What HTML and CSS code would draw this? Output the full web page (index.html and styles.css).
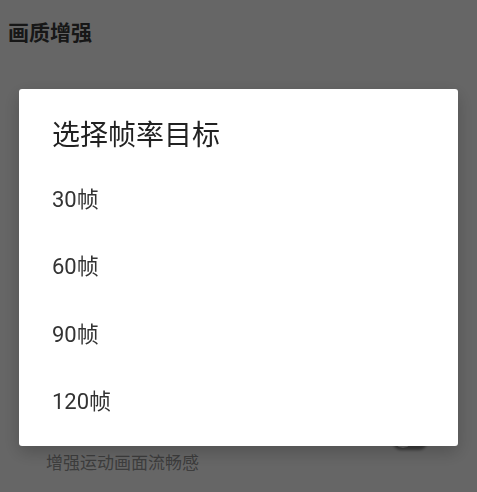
FILE: index.html
```html
<!DOCTYPE html>
<html lang="zh-CN">
<head>
<meta charset="utf-8">
<title>画质增强</title>
<link rel="stylesheet" href="styles.css">
</head>
<body>
<div class="page">
  <h1 class="page-title">画质增强</h1>
  <div class="setting-row">
    <div class="setting-desc">增强运动画面流畅感</div>
    <div class="switch"><div class="thumb"></div></div>
  </div>
</div>
<div class="overlay">
  <div class="dialog">
    <div class="dialog-title">选择帧率目标</div>
    <div class="option">30帧</div>
    <div class="option">60帧</div>
    <div class="option">90帧</div>
    <div class="option">120帧</div>
  </div>
</div>
</body>
</html>
```
FILE: styles.css
```css
html, body {
  margin: 0;
  padding: 0;
  background: #ffffff;
  font-family: Roboto, "Noto Sans CJK SC", sans-serif;
}
.page {
  padding: 18px 0 0 8px;
}
.page-title {
  margin: 0;
  font-size: 21px;
  line-height: 30px;
  font-weight: bold;
  color: #3a3a3a;
}
.setting-row {
  display: flex;
  align-items: flex-start;
  justify-content: space-between;
  margin-top: 403px;
  padding-left: 38px;
  padding-right: 50px;
}
.setting-desc {
  font-size: 17px;
  line-height: 24px;
  color: #999999;
}
.switch {
  width: 34px;
  height: 16px;
  margin-top: -21px;
  border-radius: 8px;
  background: #a8a8a8;
  box-shadow: 0 4px 3px rgba(0, 0, 0, 0.45);
  position: relative;
}
.thumb {
  position: absolute;
  left: 0;
  top: -2px;
  width: 20px;
  height: 20px;
  border-radius: 50%;
  background: #f5f5f5;
}
.overlay {
  position: fixed;
  inset: 0;
  background: rgba(0, 0, 0, 0.6);
  display: flex;
  justify-content: center;
  align-items: flex-start;
  padding-top: 89px;
}
.dialog {
  width: 439px;
  height: 357px;
  box-sizing: border-box;
  background: #ffffff;
  border-radius: 3px;
  box-shadow: 0 6px 18px rgba(0, 0, 0, 0.22);
  padding: 27px 0 13px 33px;
}
.dialog-title {
  font-size: 28px;
  line-height: 40px;
  color: #222222;
  margin-bottom: 7px;
}
.option {
  height: 67.5px;
  display: flex;
  align-items: center;
  font-size: 22px;
  color: #333333;
}
```
